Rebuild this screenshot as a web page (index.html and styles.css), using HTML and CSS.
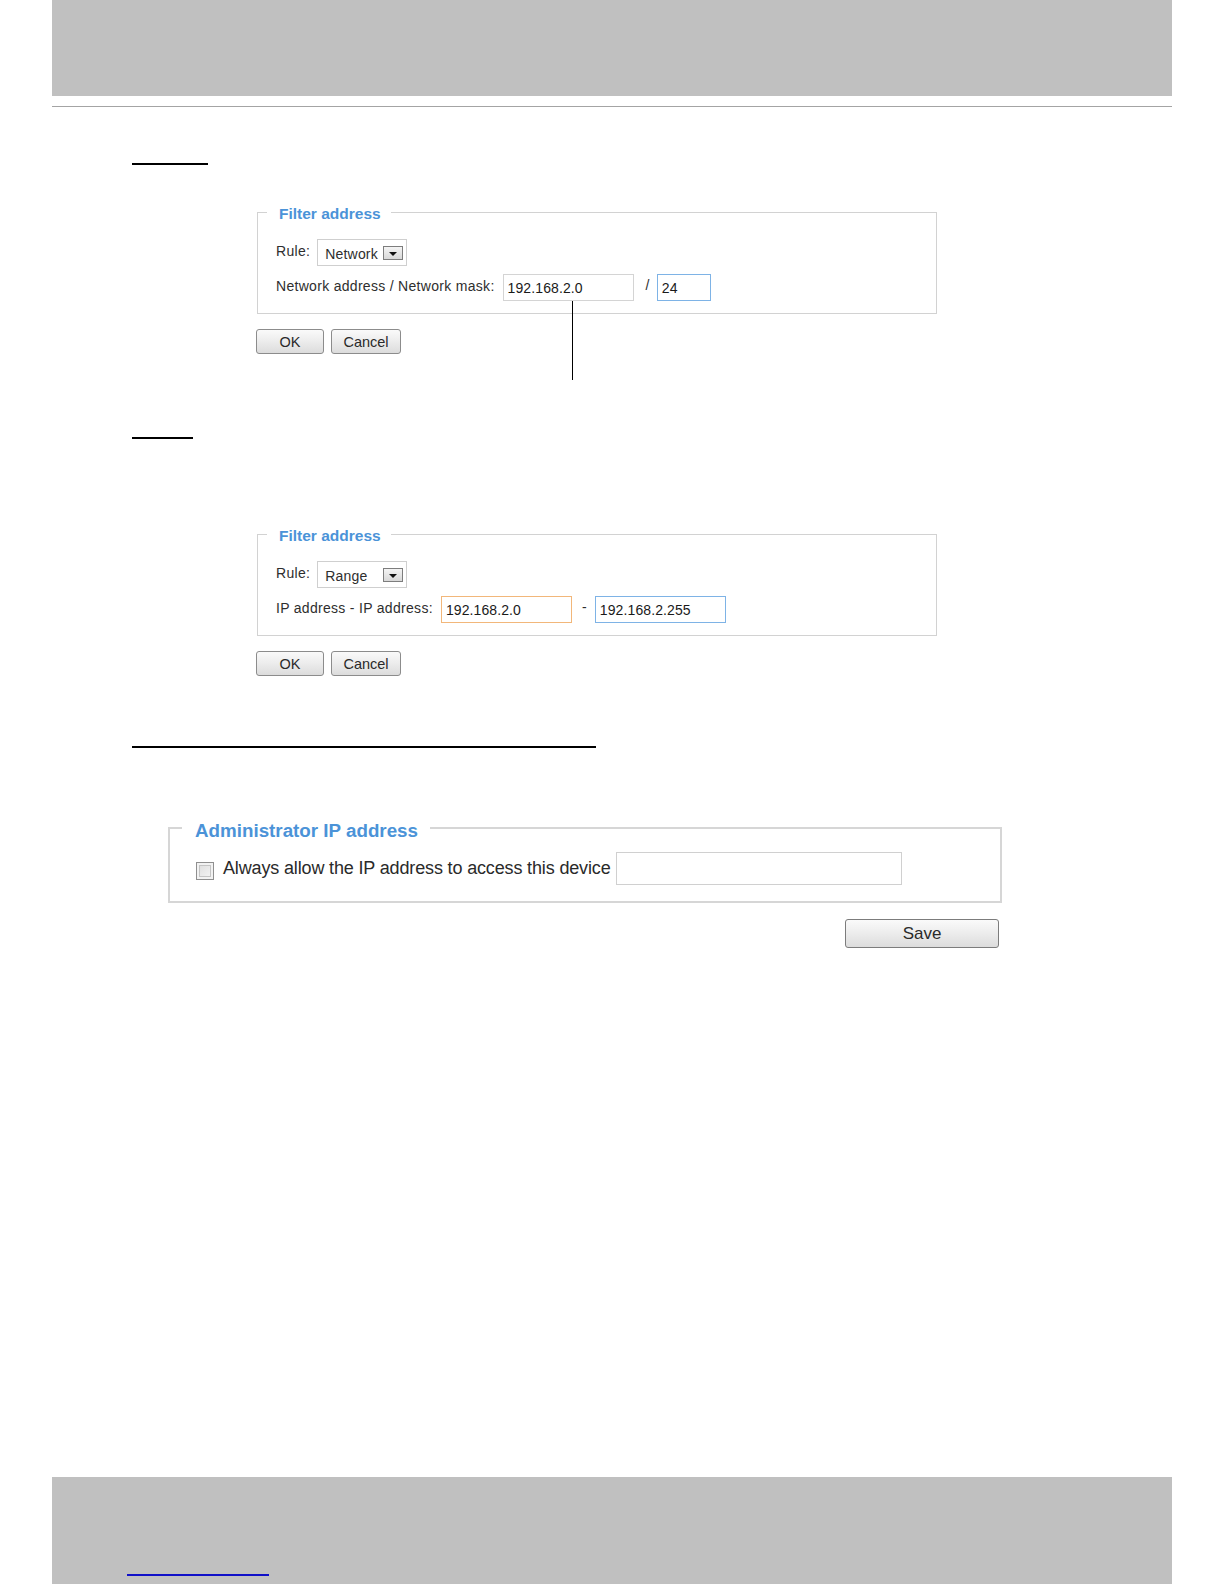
FILE: index.html
```html
<!DOCTYPE html>
<html lang="en">
<head>
<meta charset="utf-8">
<title>Filter address</title>
<link rel="stylesheet" href="styles.css">
</head>
<body>
<div class="page">
  <header class="top-band"></header>
  <div class="top-rule"></div>

  <main class="content">
    <div class="heading-line h1"></div>

    <fieldset class="filter f1">
      <legend><span class="legend-text">Filter address</span></legend>
      <div class="row rule-row">
        <span class="label">Rule:</span>
        <span class="select"><span class="select-text">Network</span><span class="drop"></span></span>
      </div>
      <div class="row">
        <span class="label">Network address / Network mask:</span>
        <span class="callout"><span class="input w131">192.168.2.0</span></span>
        <span class="sep slash">/</span>
        <span class="input w54 focus-blue">24</span>
      </div>
    </fieldset>
    <div class="btn-row">
      <button class="btn ok">OK</button>
      <button class="btn cancel">Cancel</button>
    </div>

    <div class="heading-line h2"></div>

    <fieldset class="filter f2">
      <legend><span class="legend-text">Filter address</span></legend>
      <div class="row rule-row">
        <span class="label">Rule:</span>
        <span class="select"><span class="select-text">Range</span><span class="drop"></span></span>
      </div>
      <div class="row">
        <span class="label">IP address - IP address:</span>
        <span class="input w131 focus-orange">192.168.2.0</span>
        <span class="sep dash">-</span>
        <span class="input w131 focus-blue">192.168.2.255</span>
      </div>
    </fieldset>
    <div class="btn-row">
      <button class="btn ok">OK</button>
      <button class="btn cancel">Cancel</button>
    </div>

    <div class="heading-line h3"></div>

    <fieldset class="admin">
      <legend><span class="legend-text admin-legend-text">Administrator IP address</span></legend>
      <div class="admin-row">
        <span class="checkbox"></span>
        <span class="admin-label">Always allow the IP address to access this device</span>
        <span class="input admin-input"></span>
      </div>
    </fieldset>
    <div class="save-row">
      <button class="btn save">Save</button>
    </div>
  </main>

  <footer class="bottom-band">
    <span class="footer-link"></span>
  </footer>
</div>
</body>
</html>
```

FILE: styles.css
```css
html, body {
  margin: 0;
  padding: 0;
  background: #ffffff;
}

body {
  font-family: "Liberation Sans", Arial, sans-serif;
  color: #333333;
}

.page {
  width: 1120px;
  margin: 0 0 0 52px;
  min-height: 1584px;
  display: flex;
  flex-direction: column;
}

.top-band {
  height: 96px;
  background: #c0c0c0;
}

.top-rule {
  margin-top: 10px;
  height: 1px;
  background: #a4a4a4;
}

.content {
  display: flex;
  flex-direction: column;
  align-items: flex-start;
}

.heading-line {
  height: 2px;
  background: #000000;
  margin-left: 80px;
}

.h1 { width: 76px; margin-top: 56px; }
.h2 { width: 61px; margin-top: 83px; }
.h3 { width: 464px; margin-top: 70px; }

/* Filter address fieldsets */
.filter {
  margin: 0 0 0 205px;
  width: 680px;
  box-sizing: border-box;
  border: 1px solid #d2d2d2;
  padding: 18px 18px 12px 18px;
  min-inline-size: 0;
}

.f1 { margin-top: 38px; }
.f2 { margin-top: 86px; }

.filter legend {
  margin-left: -9px;
  padding: 0 10px 0 12px;
  font-size: 15.5px;
  line-height: 18px;
  font-weight: bold;
  color: #4b93d8;
}

.legend-text {
  position: relative;
  top: 2px;
}

.admin-legend-text {
  top: 3px;
}

.row {
  display: flex;
  align-items: center;
  height: 27px;
  font-size: 14px;
  letter-spacing: 0.3px;
  color: #2e2e2e;
}

.rule-row {
  margin-bottom: 8px;
}

.label {
  margin-right: 8px;
  position: relative;
  top: -2px;
}

.rule-row .label {
  margin-right: 7px;
}

.select {
  width: 90px;
  height: 27px;
  box-sizing: border-box;
  border: 1px solid #cfcfcf;
  background: #ffffff;
  display: flex;
  align-items: center;
  justify-content: space-between;
  padding: 0 3px 0 7px;
}

.select-text {
  font-size: 14px;
  letter-spacing: 0.2px;
  position: relative;
  top: 1px;
}

.drop {
  width: 20px;
  height: 14px;
  box-sizing: border-box;
  border: 1px solid #7d7d7d;
  background: linear-gradient(#f4f4f4, #d8d8d8);
  position: relative;
}

.drop::after {
  content: "";
  position: absolute;
  left: 5px;
  top: 5px;
  border-left: 4px solid transparent;
  border-right: 4px solid transparent;
  border-top: 4px solid #111111;
}

.input {
  height: 27px;
  box-sizing: border-box;
  border: 1px solid #d4d4d4;
  background: #ffffff;
  display: inline-flex;
  align-items: center;
  padding: 1px 4px 0 4px;
  font-size: 14px;
  letter-spacing: 0.1px;
  color: #1a1a1a;
}

.w131 { width: 131px; }
.w54 { width: 54px; }

.focus-blue { border-color: #7eb3e6; }
.focus-orange { border-color: #f2b77a; }

.callout {
  position: relative;
  display: inline-flex;
}

.callout::after {
  content: "";
  position: absolute;
  left: 69px;
  top: 27px;
  width: 1px;
  height: 79px;
  background: #000000;
}

.sep {
  font-size: 14px;
  position: relative;
  top: -3px;
}

.slash { margin: 0 7px 0 12px; }
.dash { margin: 0 8px 0 10px; }

/* buttons */
.btn-row {
  margin-left: 204px;
  margin-top: 15px;
  display: flex;
  gap: 7px;
}

.btn {
  font-family: "Liberation Sans", Arial, sans-serif;
  height: 25px;
  box-sizing: border-box;
  border: 1px solid #8c8c8c;
  border-radius: 3px;
  background: linear-gradient(#fafafa 0%, #ececec 50%, #dcdcdc 100%);
  font-size: 14.5px;
  color: #2a2a2a;
  padding: 0;
  line-height: 22px;
}

.ok { width: 68px; }
.cancel { width: 70px; }

/* Administrator fieldset */
.admin {
  margin: 69px 0 0 116px;
  width: 834px;
  box-sizing: border-box;
  border: 2px solid #d6d6d6;
  padding: 13px 18px 16px 26px;
  min-inline-size: 0;
}

.admin legend {
  margin-left: -14px;
  padding: 0 12px 0 13px;
  font-size: 18.8px;
  line-height: 22px;
  font-weight: bold;
  color: #4b93d8;
}

.admin-row {
  display: flex;
  align-items: center;
  height: 33px;
}

.checkbox {
  width: 18px;
  height: 18px;
  box-sizing: border-box;
  border: 1px solid #8f8f8f;
  background: linear-gradient(135deg, #dcdcdc, #f6f6f6);
  box-shadow: inset 0 0 0 2px #f2f2f2, inset 0 0 0 3px #c4c4c4;
  margin-right: 9px;
  position: relative;
  top: 2px;
}

.admin-label {
  font-size: 18px;
  letter-spacing: -0.15px;
  color: #2a2a2a;
  margin-right: 5px;
}

.admin-input {
  width: 286px;
  height: 33px;
  border-color: #d0d0d0;
}

.save-row {
  margin-left: 793px;
  margin-top: 16px;
}

.save {
  width: 154px;
  height: 29px;
  font-size: 17px;
  line-height: 26px;
  border-color: #7c7c7c;
}

.bottom-band {
  margin-top: auto;
  height: 107px;
  background: #c0c0c0;
  position: relative;
}

.footer-link {
  position: absolute;
  left: 75px;
  top: 97px;
  width: 142px;
  height: 2px;
  background: #1010c8;
}
```
